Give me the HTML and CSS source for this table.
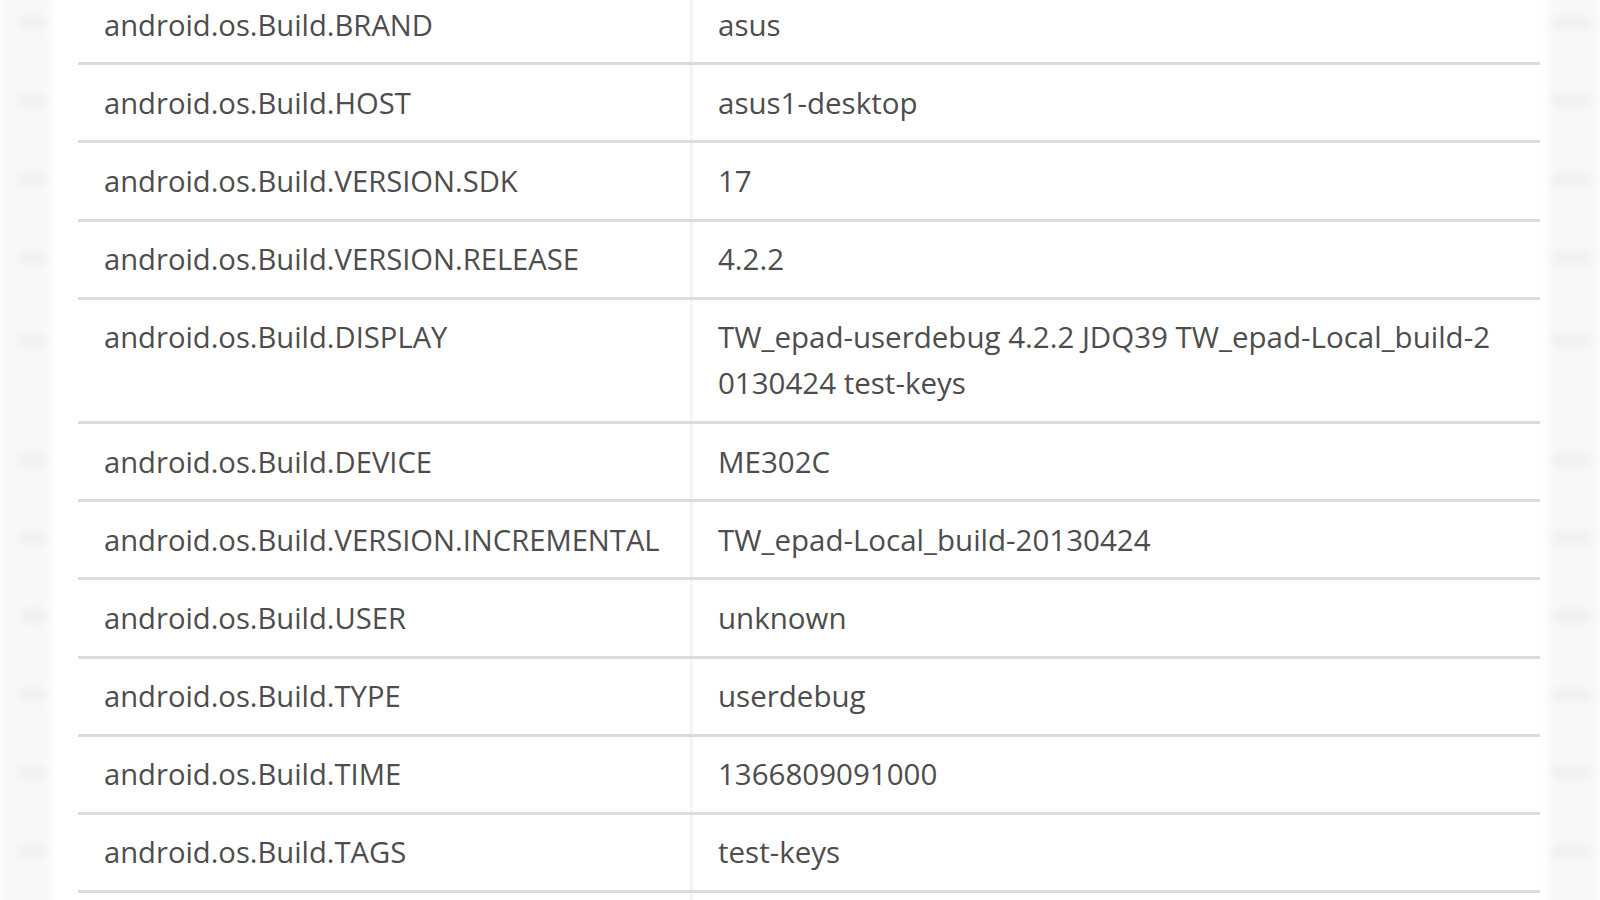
FILE: index.html
```html
<!DOCTYPE html>
<html lang="en">
<head>
<meta charset="utf-8">
<title>android.os.Build</title>
<link rel="stylesheet" href="styles.css">
</head>
<body>
<div class="page">
  <div class="ghost ghost-left">
    <div class="ghost-row"><span class="blob"></span></div>
    <div class="ghost-row"><span class="blob"></span></div>
    <div class="ghost-row"><span class="blob"></span></div>
    <div class="ghost-row"><span class="blob"></span></div>
    <div class="ghost-row tall"><span class="blob"></span></div>
    <div class="ghost-row"><span class="blob"></span></div>
    <div class="ghost-row"><span class="blob"></span></div>
    <div class="ghost-row"><span class="blob"></span></div>
    <div class="ghost-row"><span class="blob"></span></div>
    <div class="ghost-row"><span class="blob"></span></div>
    <div class="ghost-row"><span class="blob"></span></div>
  </div>

  <div class="table">
    <div class="row"><div class="key">android.os.Build.BRAND</div><div class="val">asus</div></div>
    <div class="row"><div class="key">android.os.Build.HOST</div><div class="val">asus1-desktop</div></div>
    <div class="row"><div class="key">android.os.Build.VERSION.SDK</div><div class="val">17</div></div>
    <div class="row"><div class="key">android.os.Build.VERSION.RELEASE</div><div class="val">4.2.2</div></div>
    <div class="row"><div class="key">android.os.Build.DISPLAY</div><div class="val wrap">TW_epad-userdebug 4.2.2 JDQ39 TW_epad-Local_build-20130424 test-keys</div></div>
    <div class="row"><div class="key">android.os.Build.DEVICE</div><div class="val">ME302C</div></div>
    <div class="row"><div class="key">android.os.Build.VERSION.INCREMENTAL</div><div class="val">TW_epad-Local_build-20130424</div></div>
    <div class="row"><div class="key">android.os.Build.USER</div><div class="val">unknown</div></div>
    <div class="row"><div class="key">android.os.Build.TYPE</div><div class="val">userdebug</div></div>
    <div class="row"><div class="key">android.os.Build.TIME</div><div class="val">1366809091000</div></div>
    <div class="row"><div class="key">android.os.Build.TAGS</div><div class="val">test-keys</div></div>
    <div class="row"><div class="key">&nbsp;</div><div class="val">&nbsp;</div></div>
  </div>

  <div class="ghost ghost-right">
    <div class="ghost-row"><span class="blob"></span></div>
    <div class="ghost-row"><span class="blob"></span></div>
    <div class="ghost-row"><span class="blob"></span></div>
    <div class="ghost-row"><span class="blob"></span></div>
    <div class="ghost-row tall"><span class="blob"></span></div>
    <div class="ghost-row"><span class="blob"></span></div>
    <div class="ghost-row"><span class="blob"></span></div>
    <div class="ghost-row"><span class="blob"></span></div>
    <div class="ghost-row"><span class="blob"></span></div>
    <div class="ghost-row"><span class="blob"></span></div>
    <div class="ghost-row"><span class="blob"></span></div>
  </div>
</div>
</body>
</html>
```

FILE: styles.css
```css
html, body {
  margin: 0;
  padding: 0;
  background: #ffffff;
  overflow: hidden;
}

body {
  width: 1600px;
  height: 900px;
  font-family: "Open Sans", "Noto Sans", "DejaVu Sans", sans-serif;
  color: #4d4d4d;
}

.page {
  display: grid;
  grid-template-columns: 50px 1fr 52px;
  height: 900px;
  overflow: hidden;
}

/* blurred page content at both sides */
.ghost {
  display: flex;
  flex-direction: column;
  background: #f8f8f8;
  margin-top: -16px;
  filter: blur(4px);
}

.ghost-row {
  height: 78.2px;
  flex: none;
  display: flex;
  align-items: center;
}

.ghost-row.tall {
  height: 124.2px;
  align-items: flex-start;
}

.ghost-left .blob {
  display: block;
  margin-left: 20px;
  width: 26px;
  height: 12px;
  background: #efefef;
  border-radius: 3px;
}

.ghost-right .blob {
  display: block;
  margin-left: 4px;
  width: 38px;
  height: 12px;
  background: #efefef;
  border-radius: 3px;
}

.ghost-row.tall .blob {
  margin-top: 38px;
}

.table {
  margin: -16px 8px 0 28px;
  display: flex;
  flex-direction: column;
}

.row {
  display: grid;
  grid-template-columns: 612px 1fr;
  border-top: 3px solid #dcdcdc;
  flex: none;
}

.key,
.val {
  font-size: 29.5px;
  line-height: 46px;
  padding: 14.6px 28px 14.6px 26px;
  white-space: nowrap;
}

.key {
  font-size: 29.2px;
}

.val {
  border-left: 3px solid #f4f4f4;
  padding-left: 25px;
  padding-right: 44px;
}

.val.wrap {
  white-space: normal;
  word-break: break-all;
}
```
